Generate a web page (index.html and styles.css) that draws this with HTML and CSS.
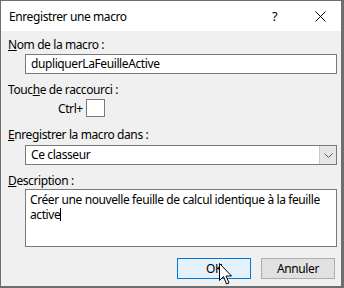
FILE: index.html
```html
<!DOCTYPE html>
<html lang="fr">
<head>
<meta charset="utf-8">
<title>Enregistrer une macro</title>
<link rel="stylesheet" href="styles.css">
</head>
<body>
<div class="window">
  <div class="titlebar">
    <span class="title">Enregistrer une macro</span>
    <span class="help">?</span>
    <span class="close">
      <svg width="11" height="11" viewBox="0 0 11 11"><path d="M0.5 0.5 L10.5 10.5 M10.5 0.5 L0.5 10.5" stroke="#000" stroke-width="1" fill="none"/></svg>
    </span>
  </div>
  <div class="content">
    <div class="label"><u>N</u>om de la macro :</div>
    <div class="field input">dupliquerLaFeuilleActive</div>

    <div class="label l2">Touc<u>h</u>e de raccourci :</div>
    <div class="shortcut">
      <span class="ctrl">Ctrl+</span>
      <span class="keybox"></span>
    </div>

    <div class="label l3"><u>E</u>nregistrer la macro dans :</div>
    <div class="field combo">
      <span class="combo-text">Ce classeur</span>
      <span class="combo-btn">
        <svg width="9" height="5" viewBox="0 0 9 5"><path d="M0.5 0.5 L4.5 4.5 L8.5 0.5" stroke="#5a5a5a" stroke-width="1" fill="none"/></svg>
      </span>
    </div>

    <div class="label l4"><u>D</u>escription :</div>
    <div class="field textarea">Créer une nouvelle feuille de calcul identique à la feuille active<span class="caret"></span></div>

    <div class="buttons">
      <button class="btn default">OK</button>
      <button class="btn">Annuler</button>
    </div>
  </div>
  <svg class="cursor" width="14" height="23" viewBox="0 0 14 23">
    <path d="M0.5 0.5 L0.5 17.5 L4.5 13.5 L7.5 21 L10 20 L7 13 L12.5 13 Z" fill="#fff" stroke="#000" stroke-width="1" stroke-linejoin="miter"/>
  </svg>
</div>
</body>
</html>
```
FILE: styles.css
```css
html, body {
  margin: 0;
  padding: 0;
}
body {
  width: 344px;
  height: 288px;
  overflow: hidden;
  font-family: "Noto Sans", "Open Sans", sans-serif;
  font-size: 12px;
  letter-spacing: -0.4px;
  color: #000;
}
.window {
  position: relative;
  box-sizing: border-box;
  width: 344px;
  height: 288px;
  border-top: 1px solid #6e6e6e;
  border-left: 1px solid #6e6e6e;
  border-right: 3px solid #6e6e6e;
  border-bottom: 2px solid #6e6e6e;
  background: #f0f0f0;
  display: flex;
  flex-direction: column;
}
.titlebar {
  height: 30px;
  background: #fff;
  display: flex;
  align-items: center;
  flex-shrink: 0;
}
.title {
  margin-left: 8px;
  flex: 1;
}
.help {
  width: 6px;
  margin-right: 37px;
  font-size: 13px;
}
.close {
  width: 11px;
  margin-right: 15px;
  display: flex;
}
.content {
  padding: 6px 4px 0 7px;
  display: flex;
  flex-direction: column;
}
.label {
  height: 16px;
  line-height: 16px;
  white-space: nowrap;
}
.field {
  box-sizing: border-box;
  margin-left: 17px;
  background: #fff;
  border: 1px solid #7a7a7a;
}
.input {
  margin-top: 1px;
  height: 20px;
  line-height: 18px;
  padding-left: 5px;
}
.l2 { margin-top: 8px; }
.shortcut {
  margin-top: 1px;
  display: flex;
  align-items: center;
  height: 18px;
}
.ctrl {
  margin-left: 50px;
  width: 28px;
}
.keybox {
  box-sizing: border-box;
  width: 19px;
  height: 18px;
  background: #fff;
  border: 1px solid #7a7a7a;
}
.l3 { margin-top: 10px; }
.combo {
  margin-top: 2px;
  height: 20px;
  display: flex;
  align-items: stretch;
}
.combo-text {
  flex: 1;
  line-height: 18px;
  padding-left: 5px;
}
.combo-btn {
  box-sizing: border-box;
  width: 17px;
  background: #e6e6e6;
  border-left: 1px solid #c8c8c8;
  display: flex;
  align-items: center;
  justify-content: center;
}
.l4 { margin-top: 8px; }
.textarea {
  height: 58px;
  padding: 2px 6px 0 4px;
  line-height: 15px;
}
.caret {
  display: inline-block;
  width: 1px;
  height: 13px;
  background: #000;
  vertical-align: -2px;
}
.buttons {
  margin-top: 11px;
  display: flex;
  justify-content: flex-end;
  gap: 10px;
  padding-right: 2px;
}
.btn {
  box-sizing: border-box;
  width: 74px;
  height: 21px;
  font-family: inherit;
  font-size: 12px;
  letter-spacing: -0.4px;
  color: #000;
  background: #e1e1e1;
  border: 1px solid #adadad;
  padding: 0;
  margin: 0;
}
.btn.default {
  background: #e5f1fb;
  border: 1px solid #0078d7;
}
.cursor {
  position: absolute;
  left: 218px;
  top: 262px;
}
```
